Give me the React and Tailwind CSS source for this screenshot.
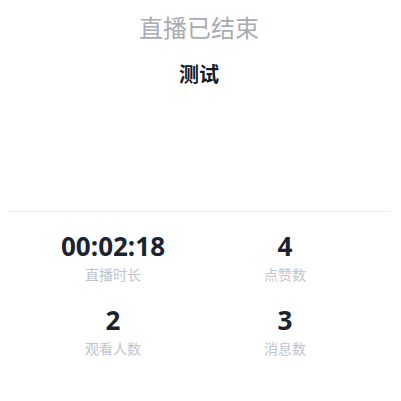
export default function App() {
  const stats = [
    { v: "00:02:18", l: "直播时长" },
    { v: "4", l: "点赞数" },
    { v: "2", l: "观看人数" },
    { v: "3", l: "消息数" },
  ];
  return (
    <div
      className="w-[401px] h-[401px] bg-white overflow-hidden"
      style={{ fontFamily: '"Open Sans", "Noto Sans CJK SC", sans-serif' }}
    >
      <div className="ml-2 mr-[11px] pt-[12px]">
        <div className="text-center text-[24px] leading-8 text-[#a8abb2] font-normal">直播已结束</div>
        <div className="mt-[17px] text-center text-[20px] leading-7 font-bold text-[#111827]">测试</div>
        <div className="mt-[122px] h-px bg-[#ebeef5]"></div>
        <div className="grid grid-cols-2 px-[19px] pt-[16px] gap-y-[17px]">
          {stats.map((s) => (
            <div key={s.l} className="flex flex-col items-center">
              <div className="text-[26px] leading-9 font-bold text-[#1a2332]">{s.v}</div>
              <div className="mt-px text-[14px] leading-5 text-[#c0c4cc]">{s.l}</div>
            </div>
          ))}
        </div>
      </div>
    </div>
  );
}
